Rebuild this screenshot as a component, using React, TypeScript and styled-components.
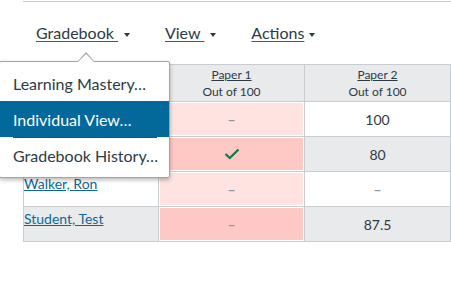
import React from "react";
import styled, { createGlobalStyle, css } from "styled-components";

const GlobalStyle = createGlobalStyle`
  html, body {
    margin: 0;
    background: #fff;
    font-family: Lato, "Noto Sans", sans-serif;
    color: #2d3b45;
  }
`;

const Page = styled.div`
  position: relative;
  width: 451px;
  height: 296px;
  padding-top: 1px;
  box-sizing: border-box;
  overflow: hidden;
`;

const Rule = styled.div`
  margin-left: 23px;
  border-top: 1px solid #c7cdd1;
`;

const Nav = styled.nav`
  display: flex;
  gap: 35px;
  padding: 21px 0 0 36px;
  height: 20px;
  margin-bottom: 21px;
`;

const NavItem = styled.div`
  display: flex;
  align-items: center;
  font-size: 16px;
  line-height: 20px;
`;

const NavLink = styled.a`
  color: #2d3b45;
  text-decoration: underline;
  text-decoration-color: #0b6c9b;
  text-underline-offset: 2px;
  white-space: pre;
`;

const Caret = styled.span<{ $gap: number }>`
  width: 0;
  height: 0;
  margin-left: ${(p) => p.$gap}px;
  margin-top: 3px;
  border-left: 3px solid transparent;
  border-right: 3px solid transparent;
  border-top: 4px solid #2d3b45;
`;

const Grid = styled.div`
  display: grid;
  grid-template-columns: 135px 146px 146px;
  grid-template-rows: 37px;
  grid-auto-rows: 35px;
  width: 428px;
  margin-left: 23px;
  border-top: 1px solid #c7cdd1;
  border-left: 1px solid #c7cdd1;
`;

type Tone = "white" | "gray" | "pink" | "rose";

const tones: Record<Tone, string> = {
  white: "#ffffff",
  gray: "#e8eaec",
  pink: "#fee3e1",
  rose: "#fec8c4",
};

const Cell = styled.div<{ $tone: Tone }>`
  box-sizing: border-box;
  border-right: 1px solid #c7cdd1;
  border-bottom: 1px solid #c7cdd1;
  background: ${(p) => tones[p.$tone]};
  ${(p) =>
    (p.$tone === "pink" || p.$tone === "rose") &&
    css`
      box-shadow: inset 0 0 0 1px #fff;
    `}
`;

const HeadCell = styled(Cell)`
  display: flex;
  flex-direction: column;
  align-items: center;
  justify-content: center;
  font-size: 12px;
  line-height: 17px;
`;

const HeadLink = styled.a`
  color: #2d3b45;
  text-decoration: underline;
`;

const NameCell = styled(Cell)`
  padding-top: 3px;
  font-size: 14px;
  line-height: 17px;
`;

const NameLink = styled.a`
  color: #0e6895;
  text-decoration: underline;
`;

const ValueCell = styled(Cell)`
  display: flex;
  align-items: center;
  justify-content: center;
  font-size: 14px;
`;

const Dash = styled.span`
  color: #8b969e;
  font-weight: 700;
`;

const Menu = styled.div`
  position: absolute;
  left: -1px;
  top: 61px;
  width: 169px;
  padding: 3px 0 4px;
  background: #fff;
  border: 1px solid #9ea6ad;
  border-radius: 2px;
  box-shadow: 0 2px 4px rgba(0, 0, 0, 0.28);

  &::before,
  &::after {
    content: "";
    position: absolute;
    left: 78px;
    width: 0;
    height: 0;
    border-left: 8px solid transparent;
    border-right: 8px solid transparent;
  }
  &::before {
    top: -10px;
    border-bottom: 9px solid #9ea6ad;
  }
  &::after {
    top: -8px;
    border-bottom: 8px solid #fff;
  }
`;

const MenuItem = styled.div<{ $active?: boolean }>`
  position: relative;
  display: flex;
  align-items: center;
  height: 36px;
  padding-left: 13px;
  font-size: 16px;
  color: ${(p) => (p.$active ? "#fff" : "#2d3b45")};
  background: ${(p) => (p.$active ? "#03689a" : "transparent")};

  ${(p) =>
    p.$active &&
    css`
      &::after {
        content: "";
        position: absolute;
        left: 13px;
        right: 12px;
        bottom: -1px;
        height: 1px;
        background: #2f4b5c;
      }
    `}
`;

const Check = () => (
  <svg width="16" height="12" viewBox="0 0 16 12">
    <path d="M1.5 6 L5.8 10 L14.5 1.5" fill="none" stroke="#127a3c" strokeWidth="2.2" />
  </svg>
);

type Row = {
  name: string;
  tone: Tone;
  p1: { tone: Tone; value: React.ReactNode };
  p2: React.ReactNode;
};

const rows: Row[] = [
  { name: "", tone: "white", p1: { tone: "pink", value: <Dash>–</Dash> }, p2: "100" },
  { name: "", tone: "gray", p1: { tone: "rose", value: <Check /> }, p2: "80" },
  { name: "Walker, Ron", tone: "white", p1: { tone: "pink", value: <Dash>–</Dash> }, p2: <Dash>–</Dash> },
  { name: "Student, Test", tone: "gray", p1: { tone: "rose", value: <Dash>–</Dash> }, p2: "87.5" },
];

export default function App() {
  return (
    <Page>
      <GlobalStyle />
      <Rule />
      <Nav>
        <NavItem>
          <NavLink>{"Gradebook "}</NavLink>
          <Caret $gap={6} />
        </NavItem>
        <NavItem>
          <NavLink>{"View "}</NavLink>
          <Caret $gap={6} />
        </NavItem>
        <NavItem>
          <NavLink>Actions</NavLink>
          <Caret $gap={5} />
        </NavItem>
      </Nav>

      <Grid>
        <HeadCell $tone="gray" />
        <HeadCell $tone="gray">
          <HeadLink>Paper 1</HeadLink>
          <span>Out of 100</span>
        </HeadCell>
        <HeadCell $tone="gray">
          <HeadLink>Paper 2</HeadLink>
          <span>Out of 100</span>
        </HeadCell>
        {rows.map((r, i) => (
          <React.Fragment key={i}>
            <NameCell $tone={r.tone}>{r.name && <NameLink>{r.name}</NameLink>}</NameCell>
            <ValueCell $tone={r.p1.tone}>{r.p1.value}</ValueCell>
            <ValueCell $tone={r.tone}>{r.p2}</ValueCell>
          </React.Fragment>
        ))}
      </Grid>

      <Menu>
        <MenuItem>Learning Mastery…</MenuItem>
        <MenuItem $active>Individual View…</MenuItem>
        <MenuItem>Gradebook History…</MenuItem>
      </Menu>
    </Page>
  );
}
